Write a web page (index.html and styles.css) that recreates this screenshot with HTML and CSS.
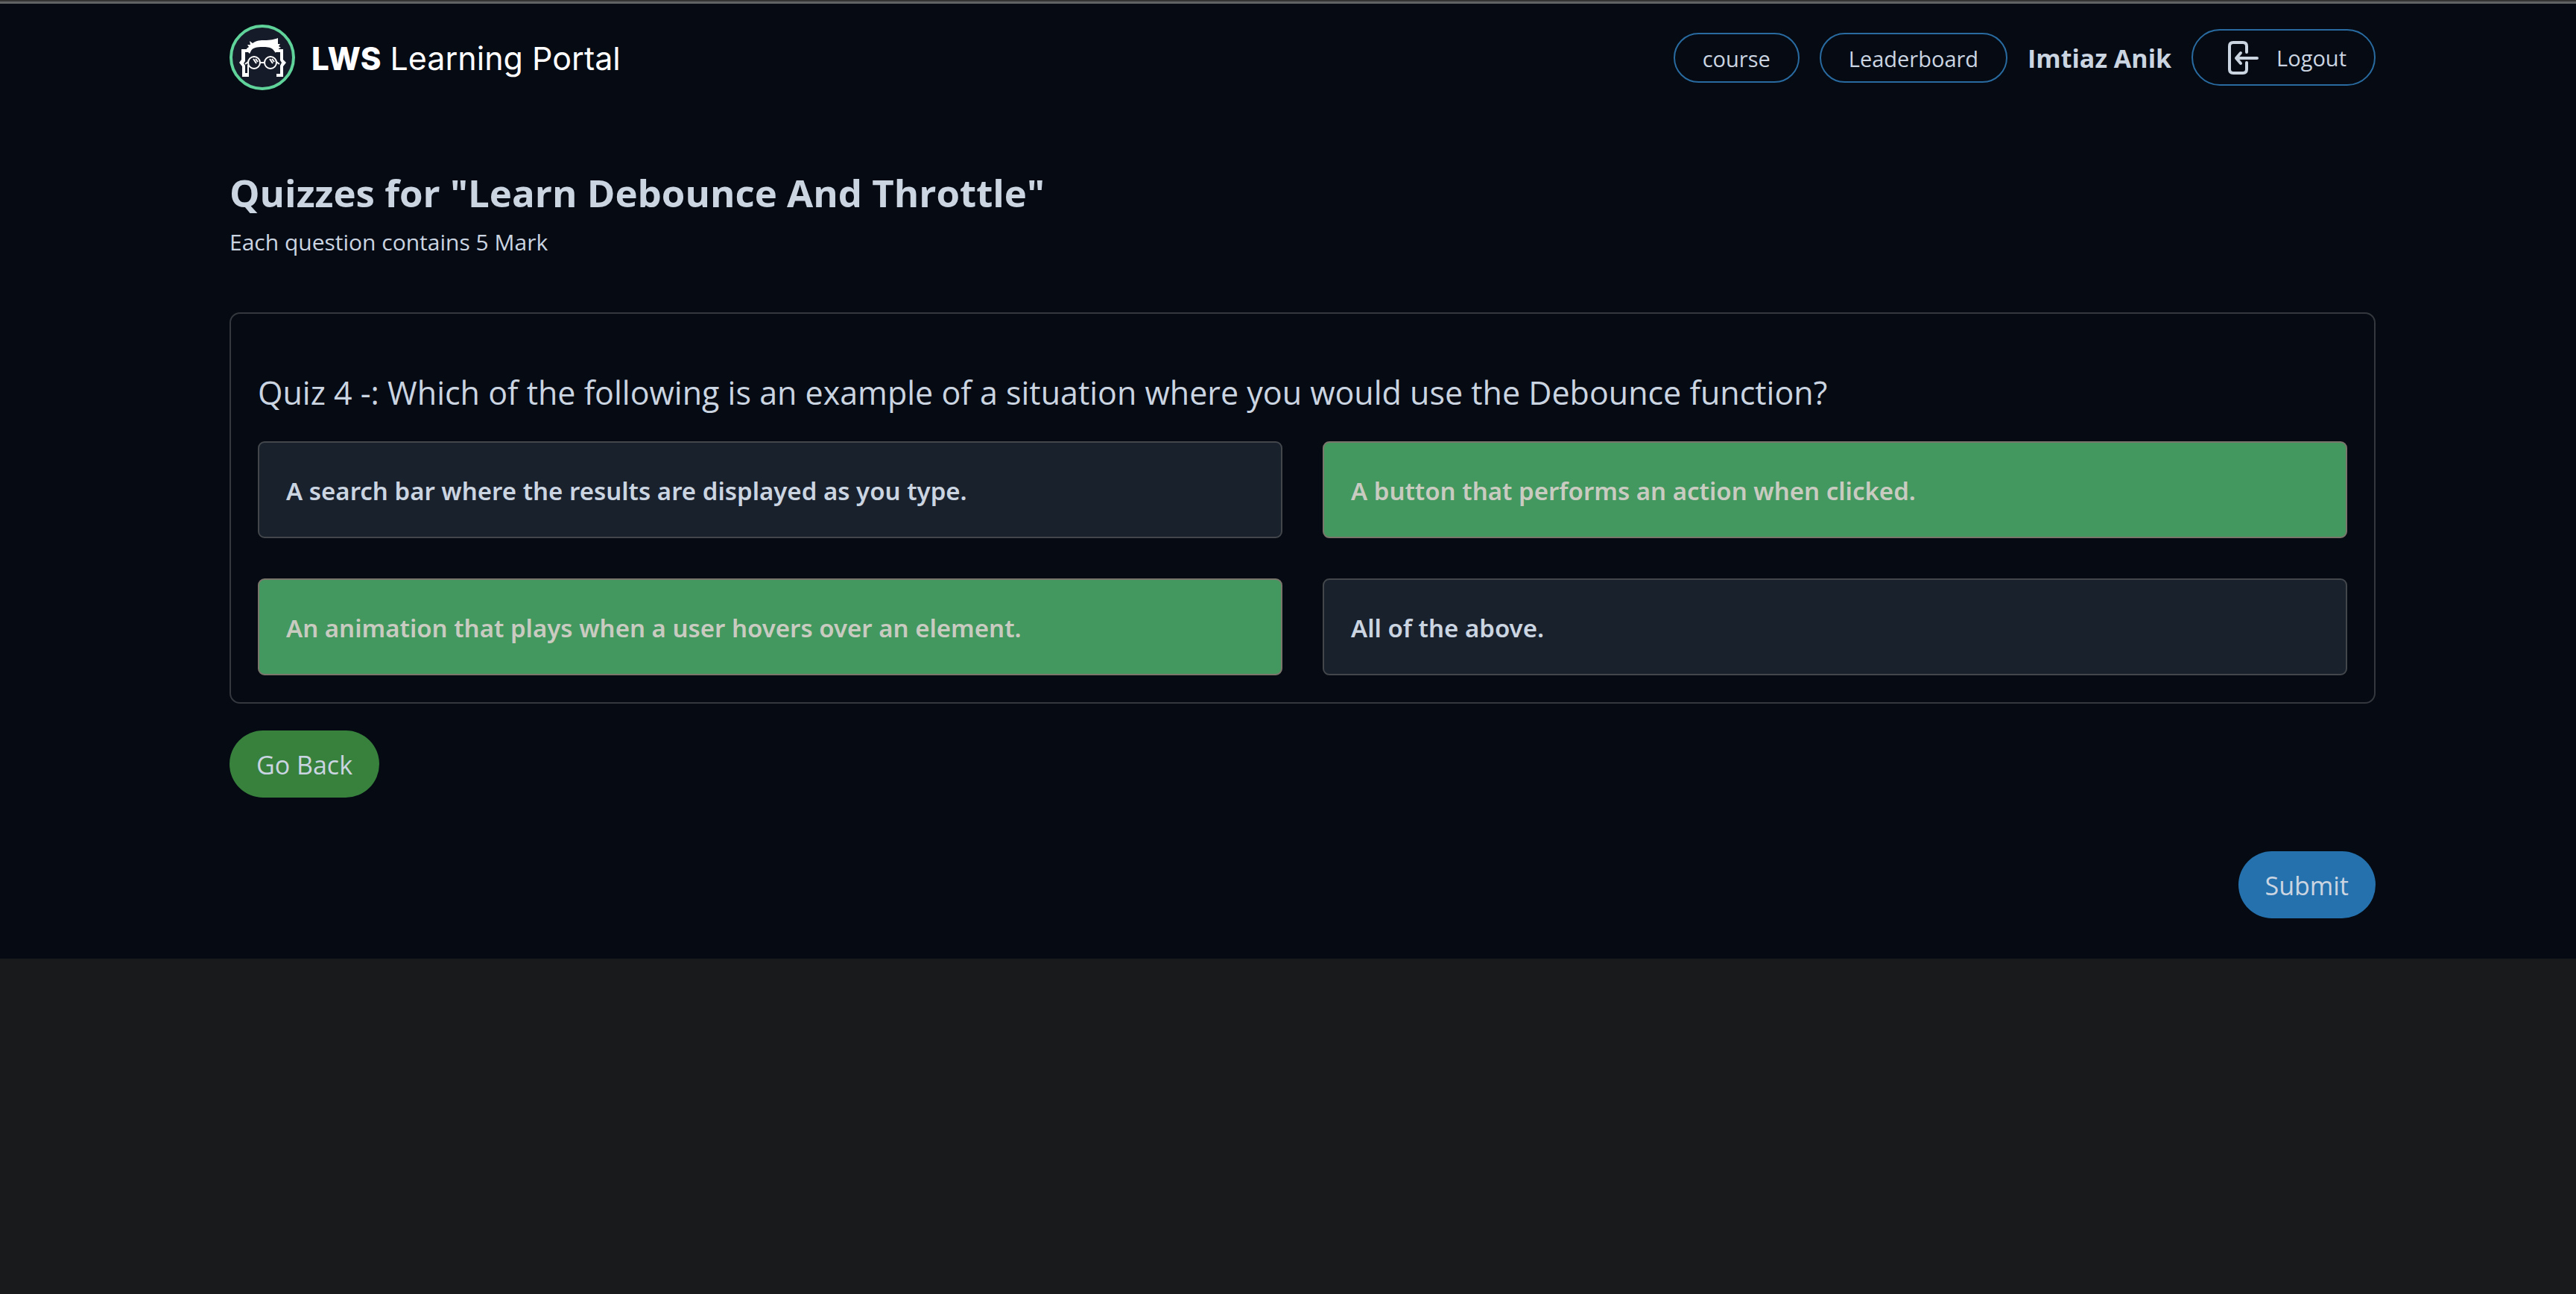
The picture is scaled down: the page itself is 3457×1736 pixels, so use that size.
FILE: index.html
```html
<!DOCTYPE html>
<html lang="en">
<head>
<meta charset="utf-8">
<meta name="viewport" content="width=device-width, initial-scale=1">
<title>LWS Learning Portal</title>
<link rel="stylesheet" href="styles.css">
</head>
<body>
<div class="page">
  <header class="navbar">
    <a class="brand" href="#">
      <svg class="brand-mark" viewBox="0 0 88 88" aria-hidden="true">
        <circle cx="44" cy="44" r="42" fill="#161b29" stroke="#5fd39a" stroke-width="4"/>
        <path fill="#fff" d="M23 32L26 30L24 27L28 27L27 22L31 25C36 21 42 21 47 21C55 21 60 20 65 18V26L68 26L66 29L69 31L66 32L67 37L63 34L62 38L58 33C54 30 50 30 44 30C37 30 31 31 29 35L27 39L24 36Z"/>
        <path fill="#fff" d="M16 33h9v4h-4v12l-2 3 2 3v10h3V54h2v16h-9V56l-4-5 3-4zM62 33h10v14l4 4-4 5v14h-9v-4h5V55l2-4-2-3V37h-6z"/>
        <g fill="none" stroke="#fff" stroke-width="2">
          <circle cx="33" cy="51" r="8"/>
          <circle cx="55" cy="51" r="8"/>
          <path d="M41 51h6M25 50l-4 3M63 50l4 3M32 46l4 6M35 46l3 4M54 46l4 6M57 46l3 4"/>
        </g>
      </svg>
      <span class="brand-name"><strong>LWS</strong> Learning Portal</span>
    </a>
    <nav class="nav-links">
      <a class="pill" href="#">course</a>
      <a class="pill" href="#">Leaderboard</a>
      <span class="user-name">Imtiaz Anik</span>
      <button class="pill pill-logout" type="button">
        <svg class="logout-icon" viewBox="0 0 44 48" aria-hidden="true">
          <path fill="none" stroke="#cbd5e1" stroke-width="4" stroke-linecap="round" stroke-linejoin="round" d="M26 17V9q0-5-5-5H8Q3 4 3 9v31q0 5 5 5h13q5 0 5-5v-9M40 25H12M18 18l-6 7 6 7"/>
        </svg>
        Logout
      </button>
    </nav>
  </header>

  <main class="content">
    <h1 class="title">Quizzes for "Learn Debounce And Throttle"</h1>
    <p class="subtitle">Each question contains 5 Mark</p>

    <form class="quiz">
      <fieldset class="card">
        <legend class="question">Quiz 4 -: Which of the following is an example of a situation where you would use the Debounce function?</legend>
        <div class="options">
          <label class="option"><input type="checkbox" name="answer">A search bar where the results are displayed as you type.</label>
          <label class="option"><input type="checkbox" name="answer" checked>A button that performs an action when clicked.</label>
          <label class="option"><input type="checkbox" name="answer" checked>An animation that plays when a user hovers over an element.</label>
          <label class="option"><input type="checkbox" name="answer">All of the above.</label>
        </div>
      </fieldset>
      <button class="action action-back" type="button">Go Back</button>
      <button class="action action-submit" type="submit">Submit</button>
    </form>
  </main>
</div>
</body>
</html>
```
FILE: styles.css
```css
* { box-sizing: border-box; }

body {
  margin: 0;
  background: #191a1b;
  color: #cbd5e1;
  font-family: "Open Sans", "Noto Sans", sans-serif;
  font-size: 29px;
}

button { font: inherit; color: inherit; cursor: pointer; }
a { color: inherit; text-decoration: none; }

.page {
  padding: 33px 269px 54px 308px;
  background: linear-gradient(#353535 0 2px, #606264 2px 5px, #050a13 5px);
}

.navbar {
  display: flex;
  align-items: center;
  justify-content: space-between;
}

.brand {
  display: flex;
  align-items: center;
  gap: 22px;
  color: #fff;
}
.brand-mark { width: 88px; height: 88px; }
.brand-name {
  padding-top: 2px;
  font-family: Inter, sans-serif;
  font-size: 43px;
  font-weight: 400;
  line-height: 48px;
}
.brand-name strong { font-size: 42px; font-weight: 800; }

.nav-links {
  display: flex;
  align-items: center;
  gap: 27px;
}
.pill {
  display: flex;
  align-items: center;
  padding: 12px 37px 10px;
  border: 2px solid #296ba0;
  border-radius: 38px;
  background: none;
  line-height: 41px;
}
.pill-logout {
  gap: 22px;
  padding: 12px 37px 12px 46px;
}
.logout-icon { width: 44px; height: 48px; }
.user-name {
  padding-top: 2px;
  font-size: 34px;
  font-weight: 700;
  line-height: 48px;
}

.title {
  margin: 104px 0 0;
  font-size: 51px;
  font-weight: 700;
  line-height: 66px;
}
.subtitle {
  margin: 12px 0 0;
  font-size: 30px;
  line-height: 44px;
}

.quiz {
  display: flex;
  flex-direction: column;
  align-items: flex-start;
  margin-top: 72px;
}
.card {
  width: 100%;
  min-width: 0;
  margin: 0;
  padding: 74px 36px 36px;
  border: 2px solid #34383e;
  border-radius: 14px;
}
.question {
  float: left;
  width: 100%;
  padding: 0;
  margin-bottom: 34px;
  font-size: 43px;
  line-height: 63px;
}
.options {
  clear: both;
  display: grid;
  grid-template-columns: 1fr 1fr;
  gap: 54px;
}
.option {
  position: relative;
  padding: 42px 36px 38px;
  border: 2px solid #43474c;
  border-radius: 9px;
  background: #19212d;
  font-family: "Noto Sans", sans-serif;
  font-size: 33px;
  font-weight: 600;
  line-height: 46px;
  cursor: pointer;
}
.option input {
  position: absolute;
  inset: 0;
  margin: 0;
  appearance: none;
  cursor: pointer;
}
.option:has(:checked) {
  border-color: #7a766c;
  background: #43985f;
  color: #c9cbc1;
}

.action {
  height: 90px;
  padding: 2px 36px 0;
  border: 0;
  border-radius: 45px;
  font-size: 34px;
}
.action-back {
  margin-top: 36px;
  background: #37813d;
}
.action-submit {
  align-self: flex-end;
  margin-top: 72px;
  background: #2471ad;
}
```
